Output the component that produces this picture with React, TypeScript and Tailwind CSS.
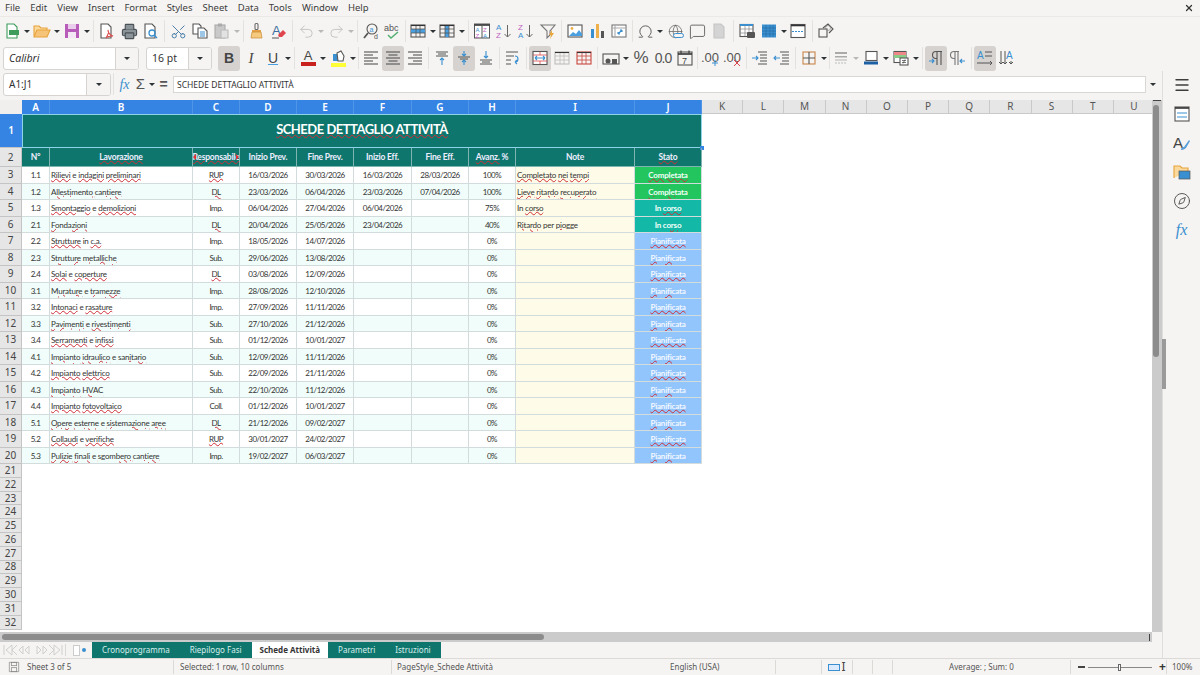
import type { ReactNode } from "react";
import { Omega, Scissors, Printer, Undo2, Redo2, Globe, MessageSquare, Compass, Menu, X } from "lucide-react";

const ui = "font-['Noto_Sans',sans-serif]";
const cell = "font-['Lato',sans-serif]";

type Row = [string, string, string, string, string, string, string, string, string, string];

const rows: Row[] = [
  ["1.1", "Rilievi e indagini preliminari", "RUP", "16/03/2026", "30/03/2026", "16/03/2026", "28/03/2026", "100%", "Completato nei tempi", "Completata"],
  ["1.2", "Allestimento cantiere", "DL", "23/03/2026", "06/04/2026", "23/03/2026", "07/04/2026", "100%", "Lieve ritardo recuperato", "Completata"],
  ["1.3", "Smontaggio e demolizioni", "Imp.", "06/04/2026", "27/04/2026", "06/04/2026", "", "75%", "In corso", "In corso"],
  ["2.1", "Fondazioni", "DL", "20/04/2026", "25/05/2026", "23/04/2026", "", "40%", "Ritardo per piogge", "In corso"],
  ["2.2", "Strutture in c.a.", "Imp.", "18/05/2026", "14/07/2026", "", "", "0%", "", "Pianificata"],
  ["2.3", "Strutture metalliche", "Sub.", "29/06/2026", "13/08/2026", "", "", "0%", "", "Pianificata"],
  ["2.4", "Solai e coperture", "DL", "03/08/2026", "12/09/2026", "", "", "0%", "", "Pianificata"],
  ["3.1", "Murature e tramezze", "Imp.", "28/08/2026", "12/10/2026", "", "", "0%", "", "Pianificata"],
  ["3.2", "Intonaci e rasature", "Imp.", "27/09/2026", "11/11/2026", "", "", "0%", "", "Pianificata"],
  ["3.3", "Pavimenti e rivestimenti", "Sub.", "27/10/2026", "21/12/2026", "", "", "0%", "", "Pianificata"],
  ["3.4", "Serramenti e infissi", "Sub.", "01/12/2026", "10/01/2027", "", "", "0%", "", "Pianificata"],
  ["4.1", "Impianto idraulico e sanitario", "Sub.", "12/09/2026", "11/11/2026", "", "", "0%", "", "Pianificata"],
  ["4.2", "Impianto elettrico", "Sub.", "22/09/2026", "21/11/2026", "", "", "0%", "", "Pianificata"],
  ["4.3", "Impianto HVAC", "Sub.", "22/10/2026", "11/12/2026", "", "", "0%", "", "Pianificata"],
  ["4.4", "Impianto fotovoltaico", "Coll.", "01/12/2026", "10/01/2027", "", "", "0%", "", "Pianificata"],
  ["5.1", "Opere esterne e sistemazione aree", "DL", "21/12/2026", "09/02/2027", "", "", "0%", "", "Pianificata"],
  ["5.2", "Collaudi e verifiche", "RUP", "30/01/2027", "24/02/2027", "", "", "0%", "", "Pianificata"],
  ["5.3", "Pulizie finali e sgombero cantiere", "Imp.", "19/02/2027", "06/03/2027", "", "", "0%", "", "Pianificata"],
];

const headers = ["N°", "Lavorazione", "Responsabile", "Inizio Prev.", "Fine Prev.", "Inizio Eff.", "Fine Eff.", "Avanz. %", "Note", "Stato"];
const colsBlue = ["A", "B", "C", "D", "E", "F", "G", "H", "I", "J"];
const colsGray = ["K", "L", "M", "N", "O", "P", "Q", "R", "S", "T", "U"];
const menu = ["File", "Edit", "View", "Insert", "Format", "Styles", "Sheet", "Data", "Tools", "Window", "Help"];

const sheetCols = "grid grid-cols-[28px_143px_47px_57px_57px_58px_57px_47px_119px_67px]";

// parole che il controllo ortografico non sottolinea
const plainWords = new Set(["e", "in", "In", "per", "%"]);

function Spelled({ text }: { text: string }) {
  return (
    <>
      {text.split(" ").map((w, i) => (
        <span key={i}>
          {i > 0 && " "}
          <span className={plainWords.has(w) ? "" : "underline decoration-wavy decoration-[#d0303a] decoration-1 underline-offset-0"}>{w}</span>
        </span>
      ))}
    </>
  );
}

function Ic({ children, size = 18, vb = "0 0 18 18" }: { children: ReactNode; size?: number; vb?: string }) {
  return (
    <svg width={size} height={size} viewBox={vb} fill="none" strokeWidth="1.1">
      {children}
    </svg>
  );
}

function Btn({ children, active, w = "w-[22px]" }: { children: ReactNode; active?: boolean; w?: string }) {
  return (
    <div className={`h-[25px] shrink-0 flex items-center justify-center rounded-[3px] ${w} ${active ? "bg-[#d5d2cf]" : ""}`}>
      {children}
    </div>
  );
}

function Dd({ light, w = "w-[8px]" }: { light?: boolean; w?: string }) {
  return (
    <div className={`shrink-0 flex justify-center ${w}`}>
      <div className={`border-x-[3px] border-t-[3px] border-x-transparent ${light ? "border-t-[#b8b8b8]" : "border-t-[#2e3436]"}`} />
    </div>
  );
}

function Sep({ w = "w-[5px]" }: { w?: string }) {
  return (
    <div className={`shrink-0 flex justify-center ${w}`}>
      <div className="w-px h-[22px] bg-[#e4e2df]" />
    </div>
  );
}

function Lines({ kind }: { kind: "l" | "c" | "r" }) {
  const ys = [3, 6, 9, 12, 15];
  const w = [14, 9, 14, 9, 14];
  return (
    <Ic>
      {ys.map((y, i) => {
        const x = kind === "l" ? 2 : kind === "c" ? 9 - w[i] / 2 : 16 - w[i];
        return <path key={y} d={`M${x} ${y}h${w[i]}`} stroke="#555" />;
      })}
    </Ic>
  );
}

function GridIc({ band, color = "#555" }: { band?: "row" | "col" | "mid"; color?: string }) {
  return (
    <Ic>
      <rect x="2" y="3" width="14" height="12" stroke={color} />
      {band === "row" && <rect x="2" y="7" width="14" height="4" fill="#4a9fe0" />}
      {band === "col" && <rect x="7" y="3" width="4" height="12" fill="#4a9fe0" />}
      <path d="M2 7h14M2 11h14M7 3v12M11 3v12" stroke={color} strokeWidth=".8" />
      <path d="M2 3.5h14" stroke="#333" />
    </Ic>
  );
}

function Toolbar1() {
  return (
    <div className="h-[28px] flex items-center pl-px">
      <Btn><Ic><path d="M4 2h7l3 3v11H4z" fill="#fff" stroke="#3f9c5b" /><rect x="6" y="8" width="10" height="5" fill="#3f9c5b" /></Ic></Btn>
      <Dd />
      <Btn><Ic><path d="M1 14V4h5l2 2h6v2" stroke="#e7a33c" fill="#fbd89b" /><path d="M1 15l3-7h13l-3 7z" fill="#f6c478" stroke="#e7a33c" /></Ic></Btn>
      <Dd />
      <Btn><Ic><path d="M2 2h14v14H2z" fill="#b75cb8" /><rect x="5" y="2" width="8" height="5" fill="#e9cdea" /><rect x="5" y="10" width="8" height="6" fill="#f4e6f4" /></Ic></Btn>
      <Dd />
      <Sep />
      <Btn><Ic><path d="M3 2h7l3 3v11H3z" stroke="#555" fill="#fff" /><path d="M8 16c2-3 3-6 2-8 0 3 2 5 5 6-3 0-5 0-7 2z" stroke="#d94f4f" /></Ic></Btn>
      <Btn><Printer size={17} color="#4a5257" fill="#8b9499" strokeWidth={1.6} /></Btn>
      <Btn><Ic><path d="M3 2h7l3 3v11H3z" stroke="#555" fill="#fff" /><circle cx="10" cy="11" r="3" stroke="#3a8fd0" strokeWidth="1.3" /><path d="M12 13l3 3" stroke="#3a8fd0" strokeWidth="1.4" /></Ic></Btn>
      <Sep />
      <Btn><Scissors size={17} color="#4a7ea8" strokeWidth={1.4} className="-rotate-90" /></Btn>
      <Btn><Ic><path d="M2 2h6l2 2v8H2z" stroke="#555" fill="#fff" /><path d="M7 6h6l3 3v7H7z" stroke="#555" fill="#fff" /><path d="M9 10h5M9 12h5M9 14h5" stroke="#3a8fd0" /></Ic></Btn>
      <Btn><Ic><rect x="2" y="3" width="10" height="13" fill="#c9c9c9" stroke="#aaa" /><rect x="5" y="1.5" width="4" height="3" fill="#aaa" /><path d="M8 8h7v8H8z" fill="#e2e2e2" stroke="#bbb" /></Ic></Btn>
      <Dd light />
      <Sep />
      <Btn><Ic><rect x="7" y="1.5" width="3" height="6" rx="1" stroke="#6b6b6b" /><path d="M4 8h9v2H4z" fill="#e5a148" /><path d="M4 10h9l1 6H3z" fill="#f5c97e" stroke="#c98a35" strokeWidth=".7" /></Ic></Btn>
      <Btn><svg width="18" height="18" viewBox="0 0 18 18"><text x="2" y="13" fontSize="13" fill="#3e6f9f" fontFamily="Liberation Sans">A</text><path d="M8 13l5-5 3 3-4 4H9z" fill="#e0444c" /><path d="M2 16h7" stroke="#555" /></svg></Btn>
      <Sep />
      <Btn><Undo2 size={17} color="#c4c4c4" strokeWidth={1.4} /></Btn>
      <Dd light />
      <Btn><Redo2 size={17} color="#c4c4c4" strokeWidth={1.4} /></Btn>
      <Dd light />
      <Sep />
      <Btn><Ic><circle cx="10" cy="7" r="5" stroke="#555" /><path d="M6 11l-4 5" stroke="#555" strokeWidth="1.8" /><text x="7.5" y="9.5" fontSize="7" fill="#3a8fd0" fontFamily="Liberation Sans">a</text><text x="12" y="17" fontSize="7" fill="#555" fontFamily="Liberation Sans">d</text></Ic></Btn>
      <Btn><svg width="18" height="18" viewBox="0 0 18 18"><text x="0" y="9" fontSize="9" fill="#555" fontFamily="Liberation Sans">abc</text><path d="M4 13l3 3 7-6" stroke="#4fae6f" strokeWidth="1.4" fill="none" /></svg></Btn>
      <Sep w="w-[3px]" />
      <Btn><GridIc band="row" /></Btn>
      <Dd w="w-[7px]" />
      <Btn><GridIc band="col" /></Btn>
      <Dd w="w-[7px]" />
      <Sep w="w-[6px]" />
      <Btn><svg width="18" height="18" viewBox="0 0 18 18"><rect x="1.5" y="2" width="15" height="14" stroke="#555" fill="#fff" /><path d="M1.5 3h15" stroke="#333" strokeWidth="1.6" /><path d="M9 3v13" stroke="#555" /><text x="2.5" y="9.5" fontSize="6" fill="#3a8fd0" fontFamily="Liberation Sans">A</text><text x="10" y="9.5" fontSize="6" fill="#c05fc0" fontFamily="Liberation Sans">Z</text><text x="2.5" y="15.5" fontSize="6" fill="#c05fc0" fontFamily="Liberation Sans">Z</text><text x="10" y="15.5" fontSize="6" fill="#3a8fd0" fontFamily="Liberation Sans">A</text></svg></Btn>
      <Btn><svg width="18" height="18" viewBox="0 0 18 18"><text x="1" y="8" fontSize="8" fill="#3a8fd0" fontFamily="Liberation Sans">A</text><text x="1" y="16" fontSize="8" fill="#c05fc0" fontFamily="Liberation Sans">Z</text><path d="M12.5 3v12M9.5 12l3 3 3-3" stroke="#666" fill="none" /></svg></Btn>
      <Btn><svg width="18" height="18" viewBox="0 0 18 18"><text x="1" y="8" fontSize="8" fill="#c05fc0" fontFamily="Liberation Sans">Z</text><text x="1" y="16" fontSize="8" fill="#3a8fd0" fontFamily="Liberation Sans">A</text><path d="M12.5 3v12M9.5 12l3 3 3-3" stroke="#666" fill="none" /></svg></Btn>
      <Btn><Ic><path d="M2 3h14l-5 6v4l-3 3V9z" stroke="#777" /><path d="M13 8l-3 5h2l-1 4 4-6h-2z" fill="#eba53d" /></Ic></Btn>
      <Sep />
      <Btn><Ic><rect x="2" y="3" width="14" height="12" stroke="#555" fill="#fff" /><circle cx="6" cy="6.5" r="1.4" fill="#eeb04a" /><path d="M3 14l4-4 3 2 3-4 3 4v2z" fill="#4a9fe0" /></Ic></Btn>
      <Btn><Ic><rect x="3" y="7" width="3" height="9" fill="#3a8fd0" /><rect x="8" y="2" width="3" height="14" fill="#eeb04a" /><rect x="13" y="9" width="3" height="7" fill="#555" /></Ic></Btn>
      <Btn><Ic><rect x="2" y="3" width="14" height="12" stroke="#777" fill="#fff" /><path d="M2 6h14M5 3v12" stroke="#aaa" /><path d="M8 12l4-4M12 8h-2M12 8v2M8 12h2M8 12v-2" stroke="#3a8fd0" /></Ic></Btn>
      <Sep w="w-[4px]" />
      <Btn><Omega size={17} color="#555" strokeWidth={1.3} /></Btn>
      <Dd />
      <Btn><div className="relative"><Globe size={15} color="#666" strokeWidth={1.2} /><div className="absolute left-[5px] top-[9px] w-[11px] h-[5px] border border-[#3a8fd0] rounded-full bg-[#f5f4f2]" /></div></Btn>
      <Btn><MessageSquare size={17} color="#555" strokeWidth={1.2} /></Btn>
      <Btn><Ic><path d="M4 2h7l3 3v11H4z" fill="#d4d4d4" stroke="#c4c4c4" /></Ic></Btn>
      <Sep w="w-[6px]" />
      <Btn><Ic><rect x="2" y="2.5" width="13" height="12" stroke="#555" fill="#fff" /><path d="M2 3h13" stroke="#3a8fd0" strokeWidth="2" /><path d="M2 7h13M2 11h13M7 3v11M11 3v11" stroke="#888" strokeWidth=".7" /><rect x="9" y="10" width="8" height="6" rx="1" fill="#555" /></Ic></Btn>
      <Btn><Ic><rect x="2" y="2.5" width="14" height="13" fill="#3a8fd0" /><path d="M2 6h14M2 9h14M2 12h14M6 3v12M10 3v12M13 3v12" stroke="#2a6fa8" strokeWidth=".7" /></Ic></Btn>
      <Dd w="w-[7px]" />
      <Btn><Ic><rect x="2" y="2.5" width="14" height="13" stroke="#555" fill="#fff" /><path d="M2 3.5h14" stroke="#333" strokeWidth="1.6" /><path d="M3 9.5h12" stroke="#3a8fd0" strokeDasharray="2 1" /></Ic></Btn>
      <Sep w="w-[6px]" />
      <Btn><Ic><rect x="2" y="7" width="8" height="8" stroke="#555" /><path d="M6 6l5-4 5 5-4 4" stroke="#555" /><circle cx="11" cy="6" r="2.5" stroke="#888" strokeWidth=".7" /></Ic></Btn>
    </div>
  );
}

function AlignV({ pos }: { pos: "t" | "m" | "b" }) {
  return (
    <Ic>
      {pos === "t" && <path d="M3 3h12M5 5h8M3 7h12" stroke="#555" />}
      {pos === "t" && <path d="M9 16V9M7 11l2-2 2 2" stroke="#3a8fd0" />}
      {pos === "m" && <path d="M3 8h12M5 10h8" stroke="#555" />}
      {pos === "m" && <path d="M9 2v5M7 5l2 2 2-2M9 16v-5M7 13l2-2 2 2" stroke="#3a8fd0" />}
      {pos === "b" && <path d="M3 11h12M5 13h8M3 15h12" stroke="#555" />}
      {pos === "b" && <path d="M9 2v7M7 7l2 2 2-2" stroke="#3a8fd0" />}
    </Ic>
  );
}

function Toolbar2() {
  return (
    <div className="h-[26px] flex items-center pl-[3px]">
      <div className="w-[136px] h-[23px] flex bg-white border border-[#d6d3d0] rounded-[3px] overflow-hidden">
        <div className="flex-1 px-[5px] leading-[21px] text-[10.5px] italic text-[#333]">Calibri</div>
        <div className="w-[23px] flex items-center justify-center bg-[#f5f4f2] border-l border-[#d6d3d0]"><Dd /></div>
      </div>
      <div className="w-[66px] h-[23px] ml-[7px] flex bg-white border border-[#d6d3d0] rounded-[3px] overflow-hidden">
        <div className="flex-1 px-[5px] leading-[21px] text-[10.5px] text-[#333]">16 pt</div>
        <div className="w-[23px] flex items-center justify-center bg-[#f5f4f2] border-l border-[#d6d3d0]"><Dd /></div>
      </div>
      <div className="w-[6px]" />
      <Btn active><span className="font-['Liberation_Sans',sans-serif] text-[14px] font-bold text-[#444]">B</span></Btn>
      <Btn><span className="font-['Liberation_Serif',serif] text-[15px] italic text-[#444]">I</span></Btn>
      <Btn><span className="font-['Liberation_Sans',sans-serif] text-[14px] text-[#444] underline decoration-[#4a9fe0]">U</span></Btn>
      <Dd />
      <Sep />
      <Btn><div className="flex flex-col items-center leading-[12px]"><span className="font-['Liberation_Sans',sans-serif] text-[13px] text-[#444]">A</span><div className="w-[15px] h-[4px] bg-[#c9211e]" /></div></Btn>
      <Dd />
      <Btn><div className="flex flex-col items-center"><Ic size={13} vb="0 0 13 13"><path d="M1 4h5v7H1z" fill="#3a8fd0" /><path d="M5 3l4-2 3 5-1 5H6z" fill="#fff" stroke="#555" /></Ic><div className="w-[15px] h-[4px] bg-[#ffff38]" /></div></Btn>
      <Dd />
      <Sep w="w-[3px]" />
      <Btn><Lines kind="l" /></Btn>
      <Btn active><Lines kind="c" /></Btn>
      <Btn><Lines kind="r" /></Btn>
      <Sep />
      <Btn><AlignV pos="t" /></Btn>
      <Btn active><AlignV pos="m" /></Btn>
      <Btn><AlignV pos="b" /></Btn>
      <Sep />
      <Btn><Ic><path d="M2 3h12M2 7h8M2 11h5M2 15h5" stroke="#555" /><path d="M11 7c4 0 4 6 0 6M11 13l2-2M11 13l2 2" stroke="#3a8fd0" /></Ic></Btn>
      <Sep />
      <Btn active><Ic><rect x="2" y="2.5" width="14" height="13" stroke="#555" fill="#fff" /><path d="M2 6h14M2 12h14M9 3v3M9 12v3" stroke="#e05a5a" strokeWidth=".9" /><path d="M4 9h10M4 9l2-2M4 9l2 2M14 9l-2-2M14 9l-2 2" stroke="#3a8fd0" /></Ic></Btn>
      <Btn><GridIc color="#bdbdbd" /></Btn>
      <Btn><GridIc color="#c9453f" /></Btn>
      <Sep />
      <Btn><Ic><rect x="1" y="5" width="16" height="10" stroke="#555" /><circle cx="6" cy="12" r="2.5" fill="#555" /><path d="M10 10h5v5h-5z" fill="#555" /></Ic></Btn>
      <Dd />
      <Btn><span className="font-['Liberation_Sans',sans-serif] text-[17px] text-[#555]">%</span></Btn>
      <Btn><span className="font-['Liberation_Sans',sans-serif] text-[14px] text-[#555] tracking-[-1px]">0.0</span></Btn>
      <Btn><Ic><rect x="2" y="3" width="14" height="13" stroke="#555" /><path d="M2 5h14" stroke="#333" strokeWidth="1.6" /><path d="M5 1.5v3M13 1.5v3" stroke="#333" /><text x="6" y="14.5" fontSize="9" fill="#444" fontFamily="Liberation Sans">7</text></Ic></Btn>
      <Sep w="w-[3px]" />
      <Btn><svg width="20" height="18" viewBox="0 0 20 18"><text x="1" y="13" fontSize="13" fill="#555" fontFamily="Liberation Sans">.00</text><path d="M15 11v6M12 14h6" stroke="#3a8fd0" /></svg></Btn>
      <Btn><svg width="20" height="18" viewBox="0 0 20 18"><text x="1" y="13" fontSize="13" fill="#555" fontFamily="Liberation Sans">.00</text><path d="M12 11l6 6M18 11l-6 6" stroke="#e0444c" /></svg></Btn>
      <Sep w="w-[6px]" />
      <Btn><Ic><path d="M7 3h9M9 6h7M9 9h7M9 12h7M7 15h9" stroke="#555" /><path d="M1 9h6M5 7l2 2-2 2" stroke="#3a8fd0" /></Ic></Btn>
      <Btn><Ic><path d="M7 3h9M9 6h7M9 9h7M9 12h7M7 15h9" stroke="#555" /><path d="M7 9H1M3 7L1 9l2 2" stroke="#3a8fd0" /></Ic></Btn>
      <Sep />
      <Btn><Ic><rect x="3" y="3" width="12" height="12" stroke="#c9864a" /><path d="M9 3v12M3 9h12" stroke="#555" /></Ic></Btn>
      <Dd />
      <Sep w="w-[2px]" />
      <Btn><Ic><path d="M3 3h12v2H3zM3 7h12v1.5H3z" fill="#aaa" /><path d="M3 11h12" stroke="#bbb" /><path d="M3 14h12" stroke="#bbb" strokeDasharray="2 1" /></Ic></Btn>
      <Dd light />
      <Btn><Ic><rect x="4" y="2.5" width="11" height="9" stroke="#555" fill="#fff" /><path d="M2 12.5h14v3H2z" fill="#1c5fa5" /></Ic></Btn>
      <Dd />
      <Btn><Ic><rect x="2" y="2.5" width="12" height="11" stroke="#555" fill="#fff" /><path d="M2 3h12v3H2z" fill="#e88" /><path d="M2 6h12v3H2z" fill="#8c8" /><rect x="8" y="9" width="8" height="7" fill="#fff" stroke="#555" /><path d="M10 11.5h4M10 13.5h4M13 10.5l-2 4" stroke="#555" strokeWidth=".8" /></Ic></Btn>
      <Dd />
      <Sep w="w-[5px]" />
      <Btn active><Ic><path d="M10 3v13M14 3v13M15 2.5H9a3.5 3.5 0 000 7h1" stroke="#555" /><path d="M2 12h5M5 10l2 2-2 2" stroke="#3a8fd0" /></Ic></Btn>
      <Btn><Ic><path d="M6 3v13M9 3v13M10 2.5H5a3.5 3.5 0 000 7h1" stroke="#777" /><path d="M16 12h-5M13 10l-2 2 2 2" stroke="#3a8fd0" /></Ic></Btn>
      <Sep />
      <Btn active><svg width="18" height="18" viewBox="0 0 18 18"><text x="1" y="10" fontSize="10" fill="#3a8fd0" fontFamily="Liberation Sans">A</text><path d="M9 3h7M9 7h7M1 14h15M14 12l2 2-2 2" stroke="#555" fill="none" /></svg></Btn>
      <Btn><svg width="18" height="18" viewBox="0 0 18 18"><text x="8" y="10" fontSize="10" fill="#3a8fd0" fontFamily="Liberation Sans">A</text><path d="M3 2v13M7 2v13M1 13l2 2 2-2M5 13l2 2 2-2M13 12v3M11 13l2 2 2-2" stroke="#555" fill="none" /></svg></Btn>
    </div>
  );
}

function FormulaBar() {
  return (
    <div className="h-[26px] shrink-0 flex items-center pl-[3px] pr-[3px]">
      <div className="w-[108px] h-[23px] flex bg-white border border-[#d6d3d0] rounded-[3px] overflow-hidden">
        <div className="flex-1 px-[5px] leading-[21px] text-[10px] text-[#333]">A1:J1</div>
        <div className="w-[24px] flex items-center justify-center bg-[#f5f4f2] border-l border-[#d6d3d0]"><Dd /></div>
      </div>
      <Sep w="w-[4px]" />
      <div className="w-[19px] text-center font-['Liberation_Serif',serif] italic text-[14px] text-[#3a8fd0]">fx</div>
      <div className="w-[13px] text-center font-['Liberation_Sans',sans-serif] text-[15px] text-[#555]">Σ</div>
      <Dd w="w-[10px]" />
      <div className="w-[13px] text-center font-['Liberation_Sans',sans-serif] text-[14px] font-bold text-[#555]">=</div>
      <div className="ml-[3px] flex-1 h-[17px] bg-white border border-[#d9d7d4] px-[3px] leading-[15px] text-[8.5px] text-[#333]">SCHEDE DETTAGLIO ATTIVITÀ</div>
      <Dd w="w-[13px]" />
    </div>
  );
}

function statoClass(s: string) {
  if (s === "Completata") return "bg-[#22c55e] text-[#f1fff5]";
  if (s === "In corso") return "bg-[#14b8a6] text-[#f1fffb]";
  return "bg-[#93c5fd] text-[#f2f7ff]";
}

function Sheet() {
  const blankRows = Array.from({ length: 12 }, (_, i) => 21 + i);
  const rowHead = "w-[22px] shrink-0 flex items-center justify-center bg-[#e6e6e6] border-r border-b border-[#c4c4c4] text-[#444] text-[10px]";
  return (
    <div className={`flex-1 min-w-0 min-h-0 bg-white overflow-hidden ${ui}`}>
      {/* intestazioni di colonna */}
      <div className="flex h-[14px]">
        <div className="w-[22px] shrink-0 bg-[#f0efed]" />
        <div className={`${sheetCols} bg-[#3584e4]`}>
          {colsBlue.map((c) => (
            <div key={c} className="text-center text-white text-[10px] font-semibold leading-[14px] border-r border-[#4f95e8]">{c}</div>
          ))}
        </div>
        <div className="flex-1 min-w-0 flex bg-[#e6e6e6] border-b border-[#c9c9c9] overflow-hidden">
          {colsGray.map((c) => (
            <div key={c} className="w-[41.2px] shrink-0 text-center text-[#555] text-[10px] leading-[13px] border-r border-[#c9c9c9]">{c}</div>
          ))}
        </div>
      </div>
      {/* riga 1: titolo unito */}
      <div className="flex h-[34px]">
        <div className="w-[22px] shrink-0 flex items-center justify-center bg-[#3584e4] text-white text-[10px] font-semibold border-b border-[#c4c4c4]">1</div>
        <div className={`relative w-[680px] flex items-center justify-center pb-[3px] bg-[#0f766e] border-[1.5px] border-[#8fd3e8] text-white text-[13px] tracking-[-0.5px] font-bold ${cell}`}>
          <span><Spelled text="SCHEDE DETTAGLIO ATTIVITÀ" /></span>
          <div className="absolute -right-[3px] -bottom-[3px] w-[4px] h-[4px] bg-[#3584e4]" />
        </div>
      </div>
      {/* riga 2: intestazioni tabella */}
      <div className="flex h-[19px]">
        <div className={rowHead}>2</div>
        <div className={`${sheetCols} bg-[#0f766e]`}>
          {headers.map((h) => (
            <div key={h} className={`relative flex justify-center border-r border-b border-[#7fb5b0] text-[#eef] text-[8.5px] tracking-[-0.2px] font-bold leading-[18px] overflow-hidden whitespace-nowrap ${cell}`}>
              {h === "Lavorazione" || h === "Avanz. %" || h === "Stato" ? <span><Spelled text={h} /></span> : h === "Responsabile" ? (
                <>
                  <span className="shrink-0"><Spelled text={h} /></span>
                  <div className="absolute left-0 top-[6px] border-y-[3px] border-r-[3px] border-y-transparent border-r-[#e0303a]" />
                  <div className="absolute right-0 top-[6px] border-y-[3px] border-l-[3px] border-y-transparent border-l-[#e0303a]" />
                </>
              ) : <span>{h}</span>}
            </div>
          ))}
        </div>
      </div>
      {rows.map((r, i) => (
        <div key={r[0]} className="flex h-[16.5px]">
          <div className={rowHead}>{i + 3}</div>
          <div className={`${sheetCols} ${cell} text-[8px] tracking-[-0.5px] text-[#333] ${i % 2 === 1 ? "bg-[#f0fdfa]" : "bg-white"}`}>
            {r.map((v, j) => {
              const base = "border-r border-b border-[#d3dcdc] leading-[16px] whitespace-nowrap overflow-hidden";
              if (j === 1) return <div key={j} className={`${base} pl-[1px] tracking-[-0.2px]`}><Spelled text={v} /></div>;
              if (j === 2) return <div key={j} className={`${base} text-center`}>{v === "DL" || v === "RUP" ? <Spelled text={v} /> : v}</div>;
              if (j === 8) return <div key={j} className={`${base} pl-[1px] tracking-[-0.2px] bg-[#fefce8]`}><Spelled text={v} /></div>;
              if (j === 9) return <div key={j} className={`${base} text-center font-bold tracking-[-0.2px] ${statoClass(v)}`}><Spelled text={v} /></div>;
              return <div key={j} className={`${base} text-center`}>{v}</div>;
            })}
          </div>
        </div>
      ))}
      {blankRows.map((n) => (
        <div key={n} className="flex h-[13.8px]">
          <div className={rowHead}>{n}</div>
        </div>
      ))}
    </div>
  );
}

function SideBar() {
  return (
    <div className="relative w-[38px] shrink-0 bg-[#f5f4f2] border-l border-[#e0dedb] flex flex-col items-center pt-[5px] gap-[11px]">
      <div className="absolute -left-[1px] top-[268px] w-[4px] h-[50px] bg-[#9a9a9a]" />
      <Menu size={18} color="#3d3d3d" strokeWidth={1.8} />
      <Ic><rect x="2" y="2" width="14" height="14" stroke="#555" fill="#fff" /><path d="M2 3h14" stroke="#333" strokeWidth="1.6" /><path d="M4 8h10M4 12h10" stroke="#3a8fd0" /></Ic>
      <svg width="18" height="18" viewBox="0 0 18 18"><text x="0" y="14" fontSize="15" fill="#444" fontFamily="Liberation Sans">A</text><path d="M8 16c0-3 3-3 3-3l5-7 1 1-4 7s-2 2-5 2z" fill="#5a9fd8" /></svg>
      <Ic><path d="M1 15V3h6l2 2h6v3" stroke="#e7a33c" fill="#fbd89b" /><rect x="6" y="8" width="11" height="8" fill="#3a8fd0" stroke="#555" strokeWidth=".7" /></Ic>
      <Compass size={18} color="#555" strokeWidth={1.3} />
      <span className="font-['Liberation_Serif',serif] italic text-[16px] leading-[18px] text-[#3a8fd0]">fx</span>
    </div>
  );
}

function Tabs() {
  const tabs = ["Cronoprogramma", "Riepilogo Fasi", "Schede Attività", "Parametri", "Istruzioni"];
  return (
    <div className={`h-[16px] shrink-0 flex items-center bg-[#f5f4f2] text-[8px] ${ui}`}>
      <div className="w-[66px] flex justify-center border-r border-[#d8d8d8]">
        <svg width="60" height="12" viewBox="0 0 60 12" fill="none" stroke="#cfcfcf" strokeWidth="1">
          <path d="M1 1v10M9 1L3 6l6 5zM14 1L9 6l5 5" />
          <path d="M20 2l-4 4 4 4zM26 2l-4 4 4 4z" />
          <path d="M34 2l4 4-4 4zM40 2l4 4-4 4z" />
          <path d="M46 1l5 5-5 5M51 1l6 5-6 5zM59 1v10" />
        </svg>
      </div>
      <div className="w-[26px] flex items-center justify-center gap-[2px]">
        <div className="w-[7px] h-[11px] bg-white border border-[#ccc]" />
        <div className="w-[4px] h-[4px] rounded-full bg-[#3a8fd0]" />
      </div>
      <div className="flex h-full items-stretch bg-[#0f766e]">
        {tabs.map((t) => (
          <div
            key={t}
            className={`flex items-center whitespace-nowrap ${t === "Schede Attività" ? "bg-white text-[#333] font-bold px-[8px]" : "text-[#d8efec] px-[10px]"}`}
          >
            {t}
          </div>
        ))}
      </div>
    </div>
  );
}

function StatusBar() {
  const div = "h-[14px] w-px bg-[#dcdad7] shrink-0";
  return (
    <div className={`h-[17px] shrink-0 flex items-center bg-[#f5f4f2] border-t border-[#dcdad7] text-[8px] text-[#555] ${ui}`}>
      <div className="w-[27px] flex justify-center">
        <Ic size={12} vb="0 0 18 18"><path d="M2 2h14v14H2z" stroke="#888" /><rect x="5" y="2" width="8" height="5" stroke="#888" /><rect x="5" y="10" width="8" height="6" stroke="#888" /></Ic>
      </div>
      <div className="w-[146px]">Sheet 3 of 5</div>
      <div className={div} />
      <div className="w-[217px] pl-[6px]">Selected: 1 row, 10 columns</div>
      <div className={div} />
      <div className="w-[278px] pl-[5px] whitespace-nowrap">PageStyle_Schede Attività</div>
      <div className="w-[105px] whitespace-nowrap">English (USA)</div>
      <div className={div} />
      <div className="w-[45px]" />
      <div className={div} />
      <div className="w-[30px] flex items-center justify-center gap-[1px]">
        <div className="w-[12px] h-[7px] border border-[#3a8fd0] bg-[#dbeafe]" />
        <span className="text-[12px] leading-[12px] text-[#444]">I</span>
      </div>
      <div className={div} />
      <div className="w-[19px]" />
      <div className={div} />
      <div className="w-[19px]" />
      <div className={div} />
      <div className="w-[177px] text-center whitespace-nowrap">Average: ; Sum: 0</div>
      <div className={div} />
      <div className="flex items-center w-[95px] pl-[7px] text-[#333]">
        <span className="w-[7px] h-[1.5px] bg-[#444]" />
        <div className="relative mx-[3px] w-[64px] h-px bg-[#888]">
          <div className="absolute left-[30px] -top-[3px] w-[3px] h-[7px] border border-[#666] bg-white" />
        </div>
        <span className="text-[12px] leading-[12px] font-bold ml-[4px]">+</span>
      </div>
      <div className={div} />
      <div className="pl-[5px]">100%</div>
    </div>
  );
}

export default function App() {
  return (
    <div className={`w-[1200px] h-[675px] flex flex-col overflow-hidden bg-[#f5f4f2] ${ui}`}>
      <div className="h-[17px] shrink-0 flex items-center justify-between pl-[5px] pr-[6px] border-b border-[#ebe9e6] text-[9.5px] text-[#3d3d3d]">
        <div className="flex gap-[10px]">
          {menu.map((m) => (
            <span key={m}>{m}</span>
          ))}
        </div>
        <X size={10} color="#333" strokeWidth={3} />
      </div>
      <Toolbar1 />
      <Toolbar2 />
      <div className="flex-1 min-h-0 flex">
        <div className="flex-1 min-w-0 flex flex-col">
          <FormulaBar />
          <div className="flex-1 min-h-0 flex mt-[3px]">
            <Sheet />
            <div className="w-[10px] shrink-0 bg-[#cbcbcb] pl-[1px]">
              <div className="w-[8px] h-px bg-[#444]" />
              <div className="w-[6px] h-[252px] mt-[4px] bg-[#8c8c8c] rounded-[3px]" />
            </div>
          </div>
          <div className="h-[10px] shrink-0 mr-[10px] flex justify-between items-center bg-[#cbcbcb] pl-[2px] pr-[2px]">
            <div className="w-[542px] h-[6px] bg-[#8c8c8c] rounded-[3px]" />
            <div className="w-px h-[7px] bg-[#444]" />
          </div>
          <Tabs />
        </div>
        <SideBar />
      </div>
      <StatusBar />
    </div>
  );
}
